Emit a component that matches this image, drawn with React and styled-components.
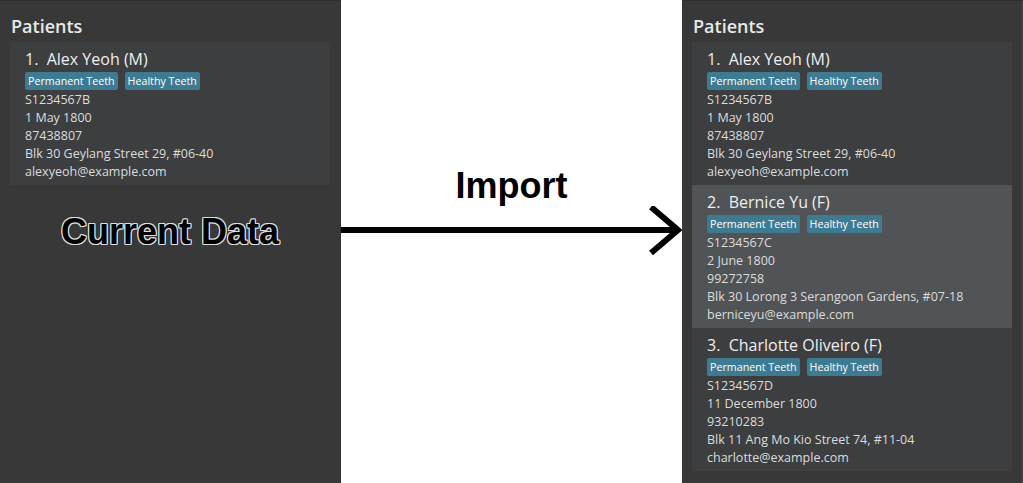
import React from "react";
import styled, { createGlobalStyle } from "styled-components";

const patients = [
  {
    name: "Alex Yeoh",
    sex: "M",
    nric: "S1234567B",
    dob: "1 May 1800",
    phone: "87438807",
    address: "Blk 30 Geylang Street 29, #06-40",
    email: "alexyeoh@example.com",
  },
  {
    name: "Bernice Yu",
    sex: "F",
    nric: "S1234567C",
    dob: "2 June 1800",
    phone: "99272758",
    address: "Blk 30 Lorong 3 Serangoon Gardens, #07-18",
    email: "berniceyu@example.com",
  },
  {
    name: "Charlotte Oliveiro",
    sex: "F",
    nric: "S1234567D",
    dob: "11 December 1800",
    phone: "93210283",
    address: "Blk 11 Ang Mo Kio Street 74, #11-04",
    email: "charlotte@example.com",
  },
];

const tags = ["Permanent Teeth", "Healthy Teeth"];

export default function App() {
  return (
    <>
      <GlobalStyle />
      <Page>
        <Panel>
          <Title>Patients</Title>
          <PatientCard patient={patients[0]} index={1} />
          <Caption>Current Data</Caption>
        </Panel>
        <Middle>
          <ImportLabel>Import</ImportLabel>
          <Arrow viewBox="0 0 341 60" width="341" height="60">
            <line x1="0" y1="24" x2="336" y2="24" stroke="#000" strokeWidth="6" />
            <polyline
              points="310,1 337,24 310,47"
              fill="none"
              stroke="#000"
              strokeWidth="6"
            />
          </Arrow>
        </Middle>
        <Panel $edge>
          <Title>Patients</Title>
          {patients.map((p, i) => (
            <PatientCard key={p.nric} patient={p} index={i + 1} selected={i === 1} />
          ))}
        </Panel>
      </Page>
    </>
  );
}

function PatientCard({ patient, index, selected }) {
  return (
    <Card $selected={selected}>
      <Name>
        {index}.&nbsp;&nbsp;{patient.name} ({patient.sex})
      </Name>
      <TagRow>
        {tags.map((t) => (
          <Tag key={t}>{t}</Tag>
        ))}
      </TagRow>
      <Field>{patient.nric}</Field>
      <Field>{patient.dob}</Field>
      <Field>{patient.phone}</Field>
      <Field>{patient.address}</Field>
      <Field>{patient.email}</Field>
    </Card>
  );
}

const GlobalStyle = createGlobalStyle`
  body {
    margin: 0;
    background: #ffffff;
    font-family: "Open Sans", "Noto Sans", sans-serif;
  }
`;

const Page = styled.div`
  display: grid;
  grid-template-columns: 341px 341px 341px;
  height: 483px;
  overflow: hidden;
`;

const Panel = styled.div`
  background: #383838;
  border-top: 1px solid #2e2e2e;
  border-right: 1px solid ${(p) => (p.$edge ? "#4a4a4a" : "#333333")};
  padding: 9px 10px 0 10px;
  display: flex;
  flex-direction: column;
  box-sizing: border-box;
`;

const Title = styled.div`
  color: #e8e8e8;
  font-size: 18px;
  font-weight: 600;
  line-height: 32px;
  padding-left: 1px;
`;

const Card = styled.div`
  background: ${(p) => (p.$selected ? "#505457" : "#3c3e40")};
  padding: 5px 15px 4px 15px;
  display: flex;
  flex-direction: column;
`;

const Name = styled.div`
  color: #eeeeee;
  font-size: 16px;
  font-weight: 500;
  line-height: 24px;
  white-space: nowrap;
`;

const TagRow = styled.div`
  display: flex;
  gap: 7px;
  margin-top: 1px;
  margin-bottom: 1px;
`;

const Tag = styled.span`
  background: #3e7b91;
  color: #ffffff;
  font-size: 10.7px;
  line-height: 18px;
  padding: 0 3px;
  border-radius: 2px;
`;

const Field = styled.div`
  color: #dcdcdc;
  font-size: 12.5px;
  line-height: 18px;
  white-space: nowrap;
`;

const Caption = styled.div`
  margin-top: 26px;
  text-align: center;
  font-family: "Liberation Sans", Arial, sans-serif;
  font-weight: 700;
  font-size: 36px;
  color: #000000;
  text-shadow: 1px 0 0 #ddd, -1px 0 0 #ddd, 0 1px 0 #ddd, 0 -1px 0 #ddd,
    1px 1px 0 #ddd, -1px -1px 0 #ddd, 1px -1px 0 #ddd, -1px 1px 0 #ddd;
`;

const Middle = styled.div`
  background: #ffffff;
  display: flex;
  flex-direction: column;
  align-items: center;
  padding-top: 165px;
`;

const ImportLabel = styled.div`
  font-family: "Liberation Sans", Arial, sans-serif;
  font-weight: 700;
  font-size: 36px;
  line-height: 42px;
  color: #000000;
`;

const Arrow = styled.svg`
  display: block;
  margin-top: -1px;
`;
